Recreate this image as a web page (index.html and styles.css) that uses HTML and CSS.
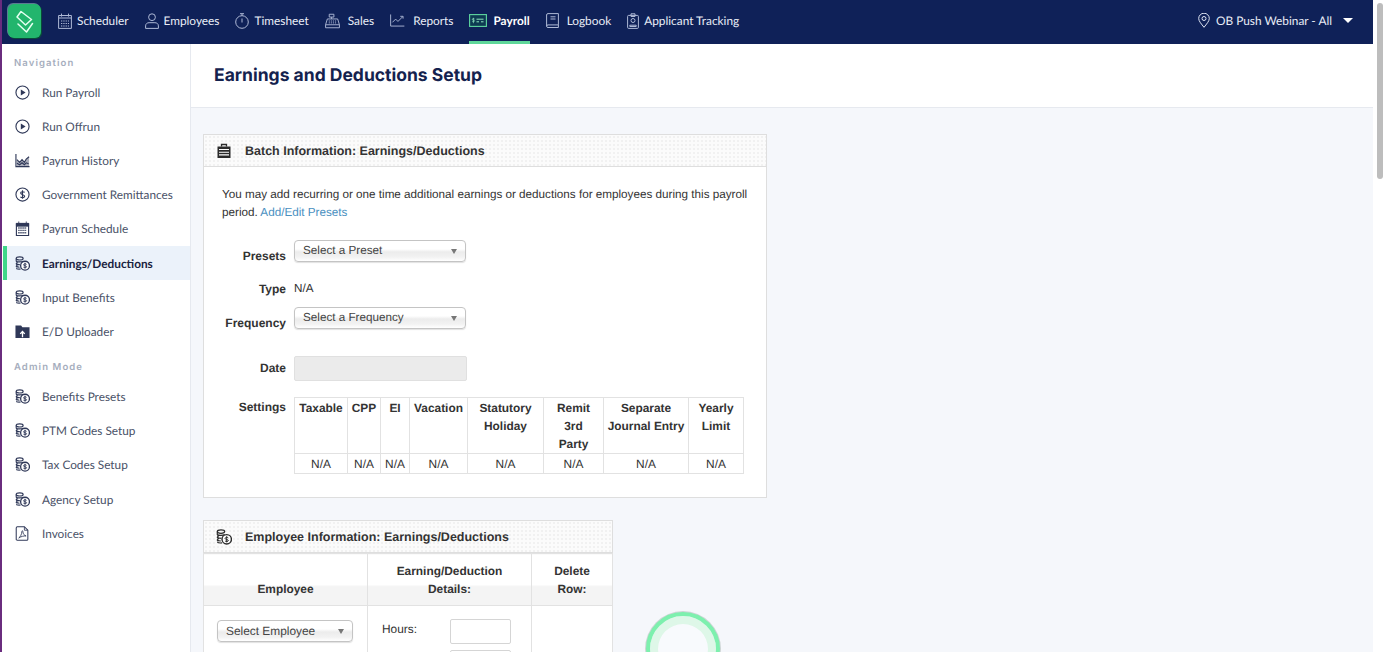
FILE: index.html
```html
<!DOCTYPE html>
<html lang="en">
<head>
    <meta charset="UTF-8">
    <title>Earnings and Deductions Setup</title>
    <link rel="stylesheet" href="styles.css">
</head>
<body>
<svg class="defs" width="0" height="0">
    <symbol id="i-play" viewBox="0 0 16 16"><circle cx="8" cy="8" r="7" fill="none" stroke="currentColor" stroke-width="1.200"/><path d="M6.200 4.800 11.300 8l-5.100 3.200z" fill="currentColor"/></symbol>
    <symbol id="i-history" viewBox="0 0 16 16"><path d="M1 1V14.500H15.500" fill="none" stroke="currentColor" stroke-width="1.200"/><path d="M2 14V7l3 3 2.500-3 2.500 3 2-3.500L15 4v10z" fill="currentColor" opacity=".4"/><path d="M2 7l3 3 2.500-3 2.500 3 2-3.500L15 4M2 11l3 1.500 2.500-2 2.500 2 2-2 2.500 1" fill="none" stroke="currentColor" stroke-width="1.200"/></symbol>
    <symbol id="i-dollar" viewBox="0 0 16 16"><circle cx="8" cy="8" r="7" fill="none" stroke="currentColor" stroke-width="1.200"/><path d="M10.300 5.800C9.500 4.800 6 4.600 6 6.500S10.300 8 10.300 9.800 7 11.800 5.800 10.500M8 3.500v9" fill="none" stroke="currentColor" stroke-width="1.200"/></symbol>
    <symbol id="i-sched" viewBox="0 0 16 16"><path d="M1.500 3h13v12.500h-13z" fill="none" stroke="currentColor" stroke-width="1.200"/><path d="M1.500 2.500h13V5.500h-13zM4 .5v2M12 .5v2" fill="currentColor" stroke="currentColor" stroke-width=".9"/><path d="M3.500 7.500h9M3.500 10h9M3.500 12.500h9" stroke="currentColor" stroke-width="1.500" stroke-dasharray="1.400 .8" fill="none"/></symbol>
    <symbol id="i-coins" viewBox="0 0 16 16"><ellipse cx="5" cy="2.600" rx="3.700" ry="1.700" fill="none" stroke="currentColor" stroke-width="1.200"/><path d="M1.300 5.500c1 .9 5.500 1.200 7.400 0M1.300 8.300c1 .8 2.500 1 4 1M1.300 11c1 .8 2.500 1 3.500 1M1.300 13.300c1 .6 3 .8 4.700.6M1.300 2.600v2.900l1 1.400-1 1.400 1 1.400-1 1.300 1 1.300" fill="none" stroke="currentColor" stroke-width="1.200"/><circle cx="10.700" cy="10.300" r="4.700" fill="#fff" stroke="currentColor" stroke-width="1.400"/><path d="M12.300 8.900c-.7-.8-3.200-.8-3.200.6s3.300.8 3.300 2-2.700 1.200-3.400.4M10.700 7.200v6.200" fill="none" stroke="currentColor" stroke-width="1"/></symbol>
    <symbol id="i-folder" viewBox="0 0 16 16"><path d="M.5 1.500h6l1.400 2H15.500V15H.5z" fill="currentColor"/><path d="M8 14V8.500M5.600 10.500 8 8l2.400 2.500" fill="none" stroke="#fff" stroke-width="1.400"/></symbol>
    <symbol id="i-pdf" viewBox="0 0 16 16"><path d="M2.500 .8h7.500l3.700 3.700V14a1.200 1.200 0 0 1-1.200 1.200h-10A1.200 1.200 0 0 1 1.300 14V2A1.200 1.200 0 0 1 2.500 .8z" fill="none" stroke="currentColor" stroke-width="1.100"/><path d="M10 1v3.500h3.500M4 12.800c1.700-1 3.300-4.300 3.300-7 0-1 1.100-1 1.100 0 0 2.700 1.600 4.300 3.400 4.800-2.200-.2-5.600.6-7.800 2.200z" fill="none" stroke="currentColor" stroke-width=".9"/></symbol>
    <symbol id="i-list" viewBox="0 0 16 16"><path d="M1.500 3.500h13V15h-13z" fill="currentColor"/><path d="M5.500 3.500V1.500h5v2" fill="none" stroke="currentColor" stroke-width="1.300"/><path d="M3 6.500h10M3 9.200h10M3 11.900h10" stroke="#fff" stroke-width="1.100"/></symbol>
</svg>

<div class="shell">
    <div class="window">
        <header class="topbar">
            <a class="logo">
                <svg width="20" height="24" viewBox="0 0 20 24"><path d="M6 2.500 16.500 10.500 10.500 16 2 8zM3 15l8.500 8 6-8.500" fill="none" stroke="#e4fff0" stroke-width="1.500" stroke-linejoin="round" stroke-linecap="round"/></svg>
            </a>
            <nav class="mainnav">
                <a class="mainnav-item">
                    <svg width="14" height="16" viewBox="0 0 14 16"><path d="M.6 2.500h12.800v12.900H.6zM3.500.6v3M10.500.6v3M.6 5h12.800" fill="none" stroke="currentColor"/><path d="M3 8h8M3 10.500h8M3 13h8" stroke="currentColor" stroke-width="1.200" stroke-dasharray="1.300 1"/></svg>
                    Scheduler
                </a>
                <a class="mainnav-item">
                    <svg width="14" height="16" viewBox="0 0 14 16"><circle cx="7" cy="4.200" r="3.400" fill="none" stroke="currentColor"/><path d="M.6 15.400v-2.500c0-2 1.500-3.200 3.500-3.200h5.800c2 0 3.500 1.200 3.500 3.200v2.500z" fill="none" stroke="currentColor"/></svg>
                    Employees
                </a>
                <a class="mainnav-item">
                    <svg width="14" height="16" viewBox="0 0 14 16"><circle cx="7" cy="9" r="6.300" fill="none" stroke="currentColor"/><path d="M5 .7h4M7 .7v2M7 5.500v4" fill="none" stroke="currentColor"/></svg>
                    Timesheet
                </a>
                <a class="mainnav-item wide">
                    <svg width="15" height="16" viewBox="0 0 16 16"><path d="M4.500.8h5v3h-5zM7 3.800v2M2.500 5.800h11L15.400 12v3.200H.6V12zM.6 12h14.800" fill="none" stroke="currentColor"/><path d="M4 8h8M4 10h8" stroke="currentColor" stroke-dasharray="1.200 1"/></svg>
                    Sales
                </a>
                <a class="mainnav-item wide">
                    <svg width="15" height="13" viewBox="0 0 16 14"><path d="M.6.500v12.500h14.800" fill="none" stroke="currentColor"/><path d="M2.500 9 6 5.500 8.500 8l5-5M11 2.500h3V5" fill="none" stroke="currentColor"/></svg>
                    Reports
                </a>
                <a class="mainnav-item is-active">
                    <svg width="18" height="13" viewBox="0 0 18 13"><rect x=".6" y=".6" width="16.800" height="11.800" fill="#0d3a52" stroke="#5fd7a0" stroke-width="1.100"/><path d="M7.500 5.200h7M7.500 7.800h2.500M12 7.800h2.500" stroke="#8fe6c0"/><path d="M5.500 5c-.5-.6-2.200-.6-2.200.4s2.300.6 2.300 1.500-1.900.9-2.400.3M4.400 3.800v5.400" fill="none" stroke="#8fe6c0" stroke-width=".7"/></svg>
                    Payroll
                </a>
                <a class="mainnav-item wide">
                    <svg width="13" height="15" viewBox="0 0 13 15"><path d="M2 .6h10.400v11.300H2A1.400 1.400 0 0 0 .6 13.300V2A1.400 1.400 0 0 1 2 .6zM.6 13.300c0 .7.600 1.200 1.400 1.200h10.400v-2.600M4.500 3.800h5M4.500 6h5" fill="none" stroke="currentColor"/></svg>
                    Logbook
                </a>
                <a class="mainnav-item">
                    <svg width="12" height="16" viewBox="0 0 12 16"><rect x=".6" y="2.400" width="10.800" height="13" rx="1" fill="none" stroke="currentColor"/><path d="M4 3.500V.8h4v2.700z" fill="none" stroke="currentColor"/><circle cx="6" cy="7.500" r="2" fill="none" stroke="currentColor"/><path d="M2.800 13.500v-1.300h6.400v1.300z" fill="none" stroke="currentColor"/></svg>
                    Applicant Tracking
                </a>
            </nav>
            <a class="location">
                <svg width="12" height="15" viewBox="0 0 12 15"><path d="M6 14.300C3.500 11 .7 8.300.7 5.500a5.300 5.300 0 0 1 10.600 0c0 2.800-2.800 5.500-5.300 8.800z" fill="none" stroke="currentColor"/><circle cx="6" cy="5.500" r="2" fill="none" stroke="currentColor"/></svg>
                OB Push Webinar - All
                <span class="caret"></span>
            </a>
        </header>

        <div class="body-row">
            <aside class="sidebar">
                <h4 class="side-title">Navigation</h4>
                <a class="side-link"><svg class="side-icon"><use href="#i-play"/></svg>Run Payroll</a>
                <a class="side-link"><svg class="side-icon"><use href="#i-play"/></svg>Run Offrun</a>
                <a class="side-link"><svg class="side-icon"><use href="#i-history"/></svg>Payrun History</a>
                <a class="side-link"><svg class="side-icon"><use href="#i-dollar"/></svg>Government Remittances</a>
                <a class="side-link"><svg class="side-icon"><use href="#i-sched"/></svg>Payrun Schedule</a>
                <a class="side-link is-active"><svg class="side-icon"><use href="#i-coins"/></svg>Earnings/Deductions</a>
                <a class="side-link"><svg class="side-icon"><use href="#i-coins"/></svg>Input Benefits</a>
                <a class="side-link"><svg class="side-icon"><use href="#i-folder"/></svg>E/D Uploader</a>
                <h4 class="side-title second">Admin Mode</h4>
                <a class="side-link"><svg class="side-icon"><use href="#i-coins"/></svg>Benefits Presets</a>
                <a class="side-link"><svg class="side-icon"><use href="#i-coins"/></svg>PTM Codes Setup</a>
                <a class="side-link"><svg class="side-icon"><use href="#i-coins"/></svg>Tax Codes Setup</a>
                <a class="side-link"><svg class="side-icon"><use href="#i-coins"/></svg>Agency Setup</a>
                <a class="side-link"><svg class="side-icon"><use href="#i-pdf"/></svg>Invoices</a>
            </aside>

            <main class="content">
                <div class="page-head"><h1>Earnings and Deductions Setup</h1></div>

                <section class="panel batch">
                    <div class="panel-head"><svg class="panel-icon"><use href="#i-list"/></svg>Batch Information: Earnings/Deductions</div>
                    <div class="panel-body">
                        <p class="intro">You may add recurring or one time additional earnings or deductions for employees during this payroll period. <a class="link">Add/Edit Presets</a></p>
                        <div class="form-row presets"><label>Presets</label><div class="pick">Select a Preset</div></div>
                        <div class="form-row type"><label>Type</label><span>N/A</span></div>
                        <div class="form-row frequency"><label>Frequency</label><div class="pick">Select a Frequency</div></div>
                        <div class="form-row date"><label>Date</label><div class="date-box"></div></div>
                        <div class="form-row settings">
                            <label>Settings</label>
                            <table class="grid">
                                <tr>
                                    <th class="c1">Taxable</th><th class="c2">CPP</th><th class="c3">EI</th><th class="c4">Vacation</th>
                                    <th class="c5">Statutory Holiday</th><th class="c6">Remit 3rd Party</th><th class="c7">Separate Journal Entry</th><th class="c8">Yearly Limit</th>
                                </tr>
                                <tr>
                                    <td>N/A</td><td>N/A</td><td>N/A</td><td>N/A</td><td>N/A</td><td>N/A</td><td>N/A</td><td>N/A</td>
                                </tr>
                            </table>
                        </div>
                    </div>
                </section>

                <section class="panel employee">
                    <div class="panel-head"><svg class="panel-icon"><use href="#i-coins"/></svg>Employee Information: Earnings/Deductions</div>
                    <table class="emp-table">
                        <tr>
                            <th class="e1">Employee</th>
                            <th class="e2">Earning/Deduction Details:</th>
                            <th class="e3">Delete Row:</th>
                        </tr>
                        <tr>
                            <td class="emp-cell"><div class="pick small">Select Employee</div></td>
                            <td class="detail-cell">
                                <div class="detail-row"><span>Hours:</span><div class="num-box"></div></div>
                                <div class="detail-row"><span></span><div class="num-box"></div></div>
                            </td>
                            <td></td>
                        </tr>
                    </table>
                </section>
            </main>
        </div>
    </div>
    <div class="scrollbar"><div class="thumb"></div></div>
</div>
<div class="spinner"></div>
</body>
</html>
```

FILE: styles.css
```css
* {
    box-sizing: border-box;
}
html, body {
    height: 100%;
    overflow: hidden;
}
body {
    margin: 0;
    font-family: "Liberation Sans", Arial, sans-serif;
    font-size: 11.700px;
    color: #333;
    background: #fff;
    text-rendering: geometricPrecision;
}
.defs {
    position: absolute;
}
.shell {
    display: flex;
    height: 652px;
    overflow: hidden;
    border-left: 2px solid #6a2c7e;
}
.window {
    flex: 1;
    min-width: 0;
    display: flex;
    flex-direction: column;
}
.scrollbar {
    width: 11px;
    padding: 3px 1px 0 4px;
    background: #fff;
}
.thumb {
    height: 176px;
    border-radius: 3px;
    background: #bdbdbd;
}

/* top bar */
.topbar {
    height: 44px;
    flex: none;
    display: flex;
    align-items: center;
    padding-left: 6px;
    padding-right: 20px;
    background: #0f2158;
    color: #e8ecf6;
    font-family: Lato, sans-serif;
    font-size: 11.850px;
}
.logo {
    width: 33px;
    height: 34px;
    margin-top: -3px;
    display: flex;
    align-items: center;
    justify-content: center;
    border-radius: 6px;
    background: #22b56d;
    box-shadow: -1px -1px 0 #5b7a92, 1px 1px 0 #0a4a3a;
}
.mainnav {
    display: flex;
    height: 100%;
    margin-left: 17px;
    gap: 16px;
}
.mainnav-item {
    display: flex;
    align-items: center;
    gap: 5px;
    height: 100%;
    border-bottom: 3px solid transparent;
    white-space: nowrap;
}
.mainnav-item.wide {
    gap: 8px;
}
.mainnav-item svg {
    color: #aeb9d6;
    flex: none;
}
.mainnav-item.is-active {
    gap: 6px;
    font-weight: 700;
    color: #fff;
    border-bottom-color: #5fd79a;
}
.location {
    margin-left: auto;
    margin-top: -3px;
    display: flex;
    align-items: center;
    gap: 6px;
    color: #e8ecf6;
}
.location svg {
    color: #dfe5f3;
}
.caret {
    margin-left: 5px;
    border-left: 5px solid transparent;
    border-right: 5px solid transparent;
    border-top: 5px solid #fff;
}

/* side nav */
.body-row {
    flex: 1;
    min-height: 0;
    display: flex;
}
.sidebar {
    width: 189px;
    flex: none;
    padding-top: 13px;
    border-right: 1px solid #e6e9ef;
    background: #fff;
    font-family: Lato, sans-serif;
}
.side-title {
    margin: 0 0 4px;
    padding-left: 12px;
    height: 14px;
    line-height: 13px;
    font-family: Inter, sans-serif;
    font-size: 9.500px;
    font-weight: 600;
    letter-spacing: 1.100px;
    color: #a5adbd;
}
.side-title.second {
    margin-top: 12px;
    margin-bottom: 5px;
}
.side-link {
    display: flex;
    align-items: center;
    height: 34.200px;
    padding-left: 13px;
    color: #4a5268;
    font-size: 11.800px;
}
.side-icon {
    width: 15px;
    height: 15px;
    margin-right: 12px;
    flex: none;
    color: #2f3858;
}
.side-link.is-active {
    margin-left: 1px;
    padding-left: 8px;
    border-left: 4px solid #3fd68a;
    background: #ebf2fa;
    color: #1a2340;
    font-weight: 700;
}

/* main */
.content {
    flex: 1;
    min-width: 0;
    background: #f5f7fb;
}
.page-head {
    height: 64px;
    padding: 22px 0 0 23px;
    background: #fff;
    border-bottom: 1px solid #e6e9ef;
}
.page-head h1 {
    margin: 0;
    font-family: Inter, sans-serif;
    font-size: 17.500px;
    line-height: 20px;
    font-weight: 700;
    color: #14224e;
}
.panel {
    margin-left: 12px;
    background: #fff;
    border: 1px solid #dedede;
}
.batch {
    width: 564px;
    height: 364px;
    margin-top: 26px;
}
.employee {
    width: 410px;
    margin-top: 22px;
}
.panel-head {
    display: flex;
    align-items: center;
    height: 32px;
    padding-left: 12px;
    border-bottom: 1px solid #dedede;
    background-color: #fbfbfb;
    background-image: radial-gradient(#f1f1f1 1px, transparent 1px);
    background-size: 4px 4px;
    font-weight: 700;
    font-size: 12.500px;
    color: #333;
}
.panel-icon {
    width: 16px;
    height: 16px;
    margin-right: 13px;
    flex: none;
    color: #2b2b2b;
}
.panel-body {
    padding: 19px 16px 0 18px;
}
.intro {
    margin: 0;
    line-height: 18px;
}
.link {
    color: #4a90bf;
}
.form-row {
    display: flex;
    align-items: flex-start;
    gap: 8px;
}
.form-row label {
    width: 64px;
    flex: none;
    text-align: right;
    font-weight: 700;
    font-size: 12px;
}
.presets {
    margin-top: 18px;
}
.presets label, .frequency label {
    padding-top: 9px;
}
.type {
    margin-top: 19px;
}
.frequency {
    margin-top: 11px;
}
.date {
    margin-top: 26px;
    align-items: center;
}
.date label {
    padding-bottom: 2px;
}
.settings {
    margin-top: 16px;
}
.settings label {
    padding-top: 3px;
}
.pick {
    position: relative;
    width: 172px;
    height: 22px;
    padding: 0 8px;
    line-height: 20px;
    text-align: left;
    border: 1px solid #c4c4c4;
    border-radius: 4px;
    background: linear-gradient(#fff 40%, #ececec 55%, #f2f2f2 80%, #fff);
    box-shadow: 0 1px 1px rgba(0, 0, 0, .12);
    color: #444;
    font-weight: 400;
}
.pick::after {
    content: "";
    position: absolute;
    right: 8px;
    top: 8px;
    border-left: 3px solid transparent;
    border-right: 3px solid transparent;
    border-top: 5px solid #777;
}
.pick.small {
    width: 136px;
}
.date-box {
    width: 173px;
    height: 25px;
    border: 1px solid #e0e0e0;
    border-radius: 2px;
    background: #ebebeb;
}
.grid {
    width: 449px;
    border-collapse: collapse;
    table-layout: fixed;
    line-height: 18px;
    font-size: 11.900px;
}
.grid th, .grid td {
    padding: 1px 1px 0;
    border: 1px solid #e2e2e2;
    text-align: center;
}
.grid th {
    vertical-align: top;
    height: 55px;
    color: #333;
}
.grid th.c6 {
    padding: 1px 6px 0;
}
.grid td {
    height: 20px;
}
.c1 { width: 53px; }
.c2 { width: 33px; }
.c3 { width: 29px; }
.c4 { width: 58px; }
.c5 { width: 76px; }
.c6 { width: 60px; }
.c7 { width: 85px; }
.c8 { width: 55px; }

.emp-table {
    width: 410px;
    margin-left: -1px;
    border-collapse: collapse;
    table-layout: fixed;
    line-height: 18px;
    font-size: 11.900px;
}
.emp-table th, .emp-table td {
    border: 1px solid #e2e2e2;
    text-align: center;
}
.emp-table th {
    height: 52px;
    padding: 7px 20px 7px;
    vertical-align: bottom;
    background: linear-gradient(#fff 60%, #f4f4f4 62%);
}
.emp-table td {
    vertical-align: top;
}
.e1, .e2 { width: 164px; }
.emp-cell {
    padding: 14px 13px 0;
}
.detail-cell {
    padding: 13px 20px 0 14px;
}
.detail-row {
    display: flex;
    justify-content: space-between;
    margin-bottom: 6px;
}
.detail-row span {
    padding-top: 1px;
}
.num-box {
    width: 61px;
    height: 25px;
    border: 1px solid #d5d5d5;
    border-radius: 2px;
    background: #fff;
}

/* loading ring */
.spinner {
    position: absolute;
    left: 646px;
    top: 612px;
    width: 74px;
    height: 74px;
    border-radius: 50%;
    border: 4px solid #7df0ae;
    background: #f8fafd;
    box-shadow: 0 0 0 1px rgba(130, 150, 140, .35), inset 0 0 0 8px #def7e8;
}
```
